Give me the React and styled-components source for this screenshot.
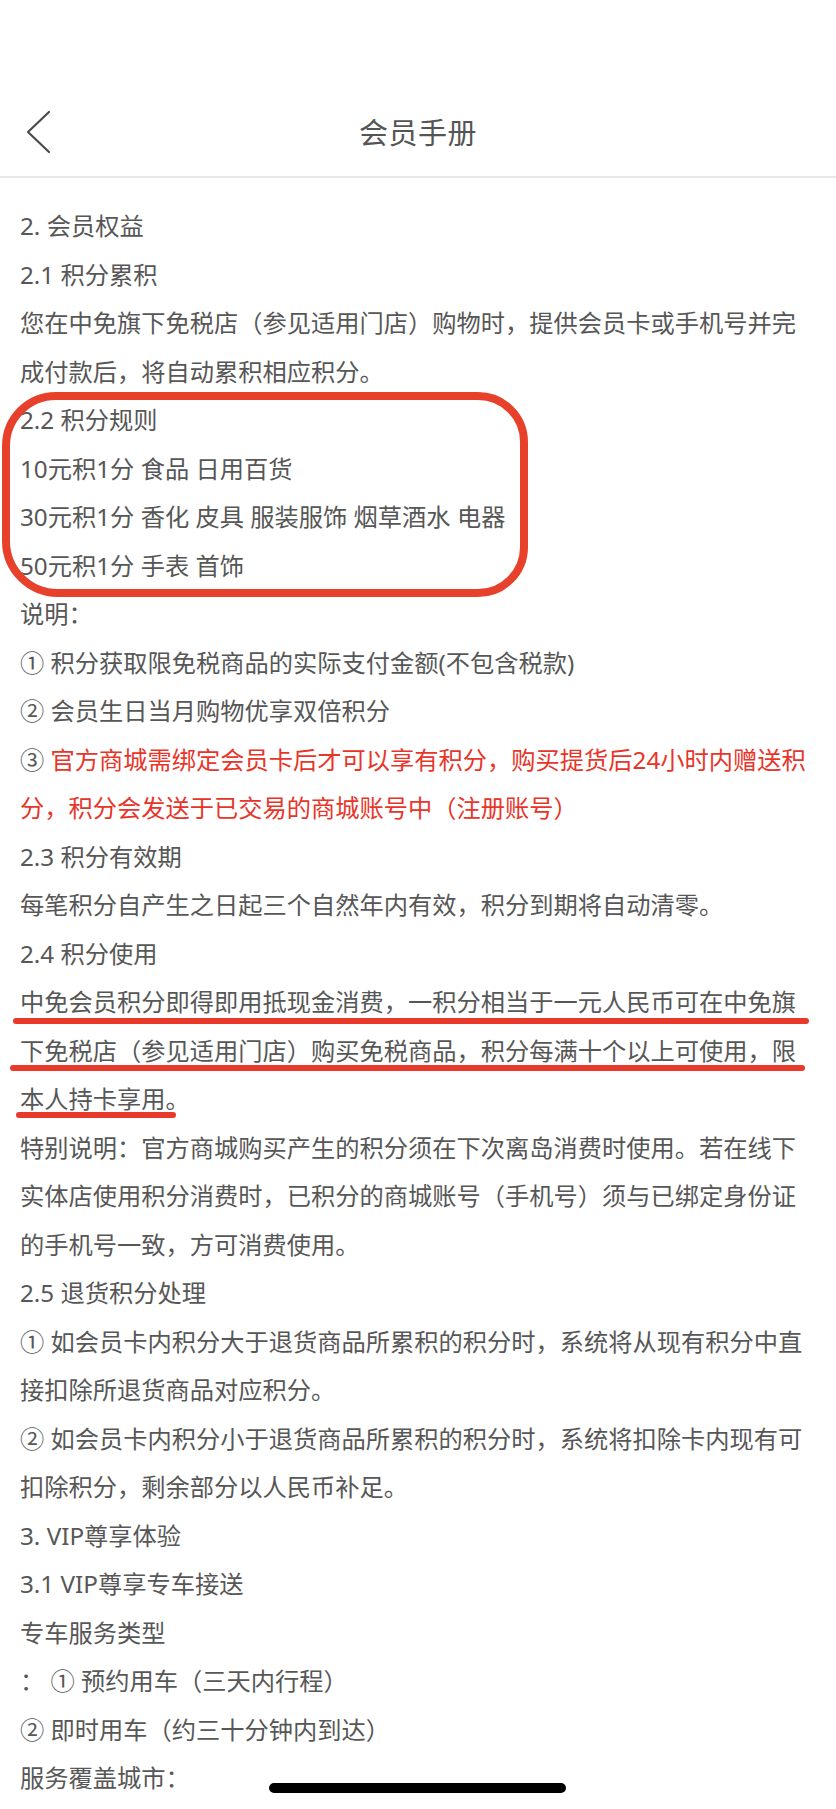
import React from "react";
import styled, { createGlobalStyle } from "styled-components";

const GlobalStyle = createGlobalStyle`
  html, body {
    margin: 0;
    padding: 0;
    background: #ffffff;
  }
  body {
    font-family: "Noto Sans", "Noto Sans CJK SC", sans-serif;
    -webkit-font-smoothing: antialiased;
  }
  * { box-sizing: border-box; }
`;

const Page = styled.div`
  position: relative;
  width: 836px;
  min-height: 1809px;
  background: #ffffff;
  overflow: hidden;
`;

const StatusBar = styled.div`
  height: 88px;
`;

const NavBar = styled.header`
  position: relative;
  height: 90px;
  display: flex;
  align-items: center;
  justify-content: center;
  border-bottom: 2px solid #e8e8e8;
  padding-bottom: 2px;
`;

const BackButton = styled.button`
  position: absolute;
  left: 22px;
  top: 20px;
  width: 36px;
  height: 48px;
  padding: 0;
  border: none;
  background: transparent;
  display: flex;
  align-items: center;
  justify-content: center;
  cursor: pointer;
`;

const Title = styled.h1`
  margin: 0;
  font-family: "Noto Sans CJK SC", sans-serif;
  font-size: 29px;
  font-weight: 400;
  color: #555555;
  letter-spacing: 0.5px;
`;

const Content = styled.main`
  padding: 24px 20px 0 20px;
  font-size: 24.25px;
  line-height: 48.5px;
  color: #575757;
`;

const Line = styled.div`
  position: relative;
  height: 48.5px;
  white-space: nowrap;
  color: ${(p) => (p.$red ? "#e8352a" : "inherit")};
`;

const Red = styled.span`
  color: #e8352a;
`;

const RuleGroup = styled.div`
  position: relative;
`;

const CircleMark = styled.div`
  position: absolute;
  top: -4px;
  bottom: -7px;
  left: -18px;
  width: 526px;
  border: 8px solid #e8412b;
  border-radius: 54px 50px 50px 56px;
  pointer-events: none;
`;

const UnderMark = styled.span`
  position: absolute;
  height: 6px;
  border-radius: 3px;
  background: #e8392a;
  pointer-events: none;
`;

const HomeIndicator = styled.div`
  position: absolute;
  left: 269px;
  bottom: 16px;
  width: 297px;
  height: 10px;
  border-radius: 5px;
  background: #000000;
`;

const BackIcon = () => (
  <svg width="36" height="48" viewBox="0 0 36 48" fill="none">
    <polyline
      points="27,4 6,24 27,44"
      stroke="#4a4a4a"
      strokeWidth="2.2"
      strokeLinecap="round"
      strokeLinejoin="round"
      fill="none"
    />
  </svg>
);

const introLines = [
  "2. 会员权益",
  "2.1 积分累积",
  "您在中免旗下免税店（参见适用门店）购物时，提供会员卡或手机号并完",
  "成付款后，将自动累积相应积分。",
];

const ruleLines = [
  "2.2 积分规则",
  "10元积1分 食品 日用百货",
  "30元积1分 香化 皮具 服装服饰 烟草酒水 电器",
  "50元积1分 手表 首饰",
];

const noteLines = [
  "说明：",
  "① 积分获取限免税商品的实际支付金额(不包含税款)",
  "② 会员生日当月购物优享双倍积分",
];

const validityLines = [
  "2.3 积分有效期",
  "每笔积分自产生之日起三个自然年内有效，积分到期将自动清零。",
  "2.4 积分使用",
];

const usageLines = [
  { text: "中免会员积分即得即用抵现金消费，一积分相当于一元人民币可在中免旗", mark: { left: -7, width: 796, top: 40 } },
  { text: "下免税店（参见适用门店）购买免税商品，积分每满十个以上可使用，限", mark: { left: -10, width: 795, top: 38 } },
  { text: "本人持卡享用。", mark: { left: -4, width: 160, top: 37 } },
];

const restLines = [
  "特别说明：官方商城购买产生的积分须在下次离岛消费时使用。若在线下",
  "实体店使用积分消费时，已积分的商城账号（手机号）须与已绑定身份证",
  "的手机号一致，方可消费使用。",
  "2.5 退货积分处理",
  "① 如会员卡内积分大于退货商品所累积的积分时，系统将从现有积分中直",
  "接扣除所退货商品对应积分。",
  "② 如会员卡内积分小于退货商品所累积的积分时，系统将扣除卡内现有可",
  "扣除积分，剩余部分以人民币补足。",
  "3. VIP尊享体验",
  "3.1 VIP尊享专车接送",
  "专车服务类型",
  "： ① 预约用车（三天内行程）",
  "② 即时用车（约三十分钟内到达）",
  "服务覆盖城市：",
];

export default function App() {
  return (
    <>
      <GlobalStyle />
      <Page>
        <StatusBar />
        <NavBar>
          <BackButton aria-label="返回">
            <BackIcon />
          </BackButton>
          <Title>会员手册</Title>
        </NavBar>
        <Content>
          {introLines.map((t) => (
            <Line key={t}>{t}</Line>
          ))}
          <RuleGroup>
            {ruleLines.map((t) => (
              <Line key={t}>{t}</Line>
            ))}
            <CircleMark />
          </RuleGroup>
          {noteLines.map((t) => (
            <Line key={t}>{t}</Line>
          ))}
          <Line>
            ③ <Red>官方商城需绑定会员卡后才可以享有积分，购买提货后24小时内赠送积</Red>
          </Line>
          <Line $red>分，积分会发送于已交易的商城账号中（注册账号）</Line>
          {validityLines.map((t) => (
            <Line key={t}>{t}</Line>
          ))}
          {usageLines.map(({ text, mark }) => (
            <Line key={text}>
              {text}
              <UnderMark style={{ left: mark.left, width: mark.width, top: mark.top }} />
            </Line>
          ))}
          {restLines.map((t) => (
            <Line key={t}>{t}</Line>
          ))}
        </Content>
        <HomeIndicator />
      </Page>
    </>
  );
}
